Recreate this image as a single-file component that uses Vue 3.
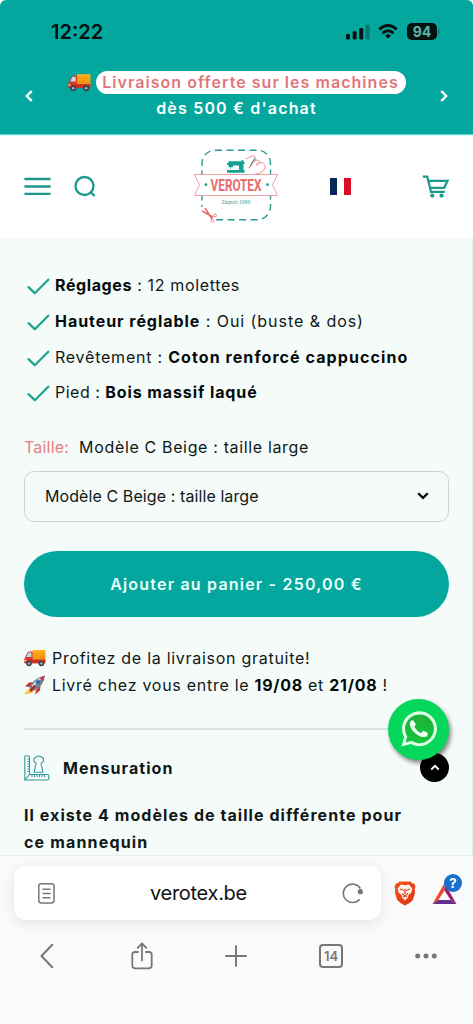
<script setup>
const features = [
  { parts: [{ t: 'Réglages', b: true, k: 'f1' }, { t: ' : 12 molettes', k: 'f2' }] },
  { parts: [{ t: 'Hauteur réglable', b: true, k: 'f3' }, { t: ' : Oui (buste & dos)', k: 'f4' }] },
  { parts: [{ t: 'Revêtement : ', k: 'f5' }, { t: 'Coton renforcé cappuccino', b: true, k: 'f6' }] },
  { parts: [{ t: 'Pied : ', k: 'f7' }, { t: 'Bois massif laqué', b: true, k: 'f8' }] },
]
</script>

<template>
  <div class="phone">
    <svg class="defs" width="0" height="0">
      <defs>
        <linearGradient id="orange" x1="0" y1="0" x2="0" y2="1"><stop offset="0" stop-color="#ffb41c" /><stop offset="1" stop-color="#f58a0c" /></linearGradient>
        <linearGradient id="brave" x1="0" y1="0" x2="1" y2="1"><stop offset="0" stop-color="#f4511e" /><stop offset="1" stop-color="#dc3410" /></linearGradient>
        <linearGradient id="wa" x1="0" y1="0" x2="0" y2="1"><stop offset="0" stop-color="#20b038" /><stop offset="1" stop-color="#12c53c" /></linearGradient>
        <symbol id="truck" viewBox="0 0 22 18">
          <rect x="8.5" y="1" width="13" height="12" rx="1" fill="url(#orange)" />
          <path d="M9 5h12M9 8.5h12" stroke="#e78a13" stroke-width=".6" />
          <path d="M3 4.2Q3.4 2.4 5 2.4H8.7V13H.6V9.2Z" fill="#d9372c" />
          <path d="M3.7 4.7Q4 3.6 5 3.6H7.4V8H2.2Z" fill="#b9dbe5" />
          <path d="M.4 10.5H21.4V14.4H.4Z" fill="#c83024" />
          <path d="M.5 11h2v1.2h-2z" fill="#ffe7a0" />
          <circle cx="5" cy="14.5" r="2.8" fill="#39414a" /><circle cx="5" cy="14.5" r="1.2" fill="#aab6bc" />
          <circle cx="17.4" cy="14.5" r="2.8" fill="#39414a" /><circle cx="17.4" cy="14.5" r="1.2" fill="#aab6bc" />
        </symbol>
      </defs>
    </svg>

    <header class="top">
      <div class="status">
        <span class="clock">12:22</span>
        <div class="sys">
          <svg width="24" height="16" viewBox="0 0 24 16"><rect x="0" y="10" width="4" height="5.5" rx="1.2" /><rect x="6.6" y="7.2" width="4" height="8.3" rx="1.2" /><rect x="13.2" y="4" width="4" height="11.5" rx="1.2" /><rect x="19.6" y=".8" width="4" height="14.7" rx="1.2" opacity=".3" /></svg>
          <svg class="wifi" width="20" height="16" viewBox="0 0 20 16" fill="none" stroke="#07110f" stroke-width="2.9"><path d="M1.2 5.3Q10-2.3 18.8 5.3" /><path d="M4.5 9.1Q10 4.4 15.5 9.1" /><path d="M7 11.4Q10 9 13 11.4L10 14.8Z" fill="#07110f" stroke="none" /></svg>
          <span class="battery">94</span><i class="nub"></i>
        </div>
      </div>
      <div class="promo">
        <svg width="10" height="12" viewBox="0 0 10 12" fill="none" stroke="#fff" stroke-width="2.5"><path d="M7.7 1 2.8 6l4.9 5" /></svg>
        <div class="promo-text">
          <div class="promo-line"><svg width="23" height="19"><use href="#truck" /></svg><span class="pill">Livraison offerte sur les machines</span></div>
          <div class="promo-second">dès 500 € d'achat</div>
        </div>
        <svg width="10" height="12" viewBox="0 0 10 12" fill="none" stroke="#fff" stroke-width="2.5"><path d="M2.3 1 7.2 6 2.3 11" /></svg>
      </div>
    </header>

    <nav class="nav">
      <svg class="burger" width="27" height="19" viewBox="0 0 27 19" stroke="#1b998b" stroke-width="2.3" stroke-linecap="round"><path d="M1.3 2H25.7M1.3 9.5H25.7M1.3 16.8H25.7" /></svg>
      <svg class="search" width="23" height="23" viewBox="0 0 23 23" fill="none" stroke="#1b998b" stroke-width="2.3"><circle cx="10.500" cy="11" r="9" /><path d="m16.300 16.800 4.400 4.200" /></svg>
      <svg class="logo" width="86" height="78" viewBox="0 0 86 78" fill="none">
        <rect x="9" y="4.2" width="68.5" height="69.5" rx="13" stroke="#2b9a93" stroke-width="1.4" stroke-dasharray="7 4.5" />
        <path d="M1.500 28.500H84.500L79.500 38.700 84.500 49.500H1.500L6.500 38.700Z" fill="#fff" stroke="#eda3a3" stroke-width="1" />
        <path d="M34 26.7V24H51.500V26.7ZM35.500 15.2H48.500V14.200H50.500V16H51.500V18H50.500V24.500H46V19.500H40V21H38V22.500H37V21H35.500V19H34V17H35.500Z" fill="#189f94" />
        <path d="M53 13Q61 8 62 11C64 15 54 22 56 22C58 22 59 15 63 14C69 14 67 19 63 19C67 12 77 20 69 26Q66 28 62 28" stroke="#e88585" stroke-width=".9" />
        <path d="m62 12-5 8" stroke="#368b8c" stroke-width="1" />
        <g transform="translate(43 45) scale(.69 1)"><text x="0" y="0" text-anchor="middle" font-family="Roboto, sans-serif" font-weight="700" font-size="17" fill="#e46d70">VEROTEX</text></g>
        <circle cx="13" cy="38.700" r="1.4" fill="#189f94" /><circle cx="74.500" cy="38.700" r="1.4" fill="#189f94" />
        <text x="43" y="58" text-anchor="middle" font-family="Liberation Serif, serif" font-style="italic" font-size="5.600" fill="#28978e">Depuis 1990</text>
        <rect x="7" y="61" width="15" height="14" fill="#fff" />
        <path d="m12 62 7 11M9 65l11 6" stroke="#e46d70" stroke-width="1.500" /><circle cx="19.500" cy="74.500" r="1.500" stroke="#e46d70" stroke-width=".8" /><circle cx="22" cy="69.500" r="1.500" stroke="#e46d70" stroke-width=".8" />
      </svg>
      <div class="flag"><i></i><i></i><i></i></div>
      <svg class="cart" width="27" height="23" viewBox="0 0 27 23" fill="none" stroke="#1b998b" stroke-width="2.200"><path d="M.8 1.700H5.300L9 16.900H22.800M6.300 5.800H25.500L22.300 12.800H8.200" /><circle cx="10.300" cy="20.600" r="2.100" fill="#1b998b" stroke="none" /><circle cx="19.500" cy="20.600" r="2.100" fill="#1b998b" stroke="none" /></svg>
    </nav>

    <main class="content">
      <ul class="features">
        <li v-for="(f, i) in features" :key="i">
          <svg width="23" height="17" viewBox="0 0 23 17" fill="none" stroke="#1fa58f" stroke-width="2.300" stroke-linecap="round" stroke-linejoin="round"><path d="M1.500 9.200 7.800 15.200 21.300 1.800" /></svg>
          <p><span v-for="p in f.parts" :key="p.k" :class="[p.k, { bold: p.b }]">{{ p.t }}</span></p>
        </li>
      </ul>
      <div class="size"><span class="label">Taille:</span><span class="value">Modèle C Beige : taille large</span></div>
      <div class="select"><span>Modèle C Beige : taille large</span><svg width="12" height="8" viewBox="0 0 12 8" fill="none" stroke="#000" stroke-width="2.300"><path d="m1.200 1.200 4.800 4.700 4.800-4.700" /></svg></div>
      <button class="buy"><span>Ajouter au panier - 250,00 €</span></button>
      <div class="delivery">
        <div><svg width="22" height="18"><use href="#truck" /></svg><span class="d1">Profitez de la livraison gratuite!</span></div>
        <div>
          <svg width="22" height="20" viewBox="0 0 22 20"><path d="M6 12 1 11.500 5 7.500 10 7Z" fill="#c8353a" /><path d="m12 15-1 4.500 5-4 .5-5Z" fill="#c8353a" /><path d="M6 12.500 0 19.500 8.500 17.500 10 14Z" fill="#ffb51d" /><path d="m6 13-3 4.500 5-2Z" fill="#fff36c" /><path d="M5.500 12.500Q8 4 20.500.8 20 11 9.500 16Z" fill="#71828f" /><path d="M8 10Q12 4 19 2L8 13Z" fill="#c5d2dc" /><path d="M15.500 2.700 20.800.5l-1.200 5.600Z" fill="#c43843" /><circle cx="14" cy="7" r="2.100" fill="#2867a7" /><path d="m6 16 5-5" stroke="#ac2936" stroke-width="2.500" /></svg>
          <span class="d2">Livré chez vous entre le <b>19/08</b> et <b>21/08</b> !</span>
        </div>
      </div>
      <hr>
      <div class="accordion">
        <svg width="26" height="26" viewBox="0 0 26 26" fill="none" stroke="#35979b" stroke-width="1.100"><path d="M5.500 19.500V2Q5.500.8 4 .8H2Q.8.800.8 2V25H23.500Q24.800 25 24.800 23.500V21Q24.800 19.500 23.500 19.500ZM5.500 19.500.8 25" /><path d="M5.500 4H3.400M5.500 6.500H3.400M5.500 9H3.400M5.500 11.500H3.400M5.500 14H3.400M5.500 16.500H3.400M8 19.500v2.500M10.500 19.500v2.500M13 19.500v2.500M15.500 19.500v2.500M18 19.500v2.500M20.500 19.500v2.500" /><path d="M13 1.500Q14.800.5 16.500 1.500L19.500 3.200 19.200 6.500 17.200 8.200Q16.800 9.500 17.800 11.500L18.800 17.300H10.200L11.300 11.500Q12.300 9.500 12 8.200L10 6.500 10 3.200Z" /></svg>
        <h2>Mensuration</h2>
        <span class="toggle"><svg width="10" height="7" viewBox="0 0 10 7" fill="none" stroke="#fff" stroke-width="1.900"><path d="M1.300 5.500 5 1.800l3.700 3.700" /></svg></span>
        <span class="whatsapp"><svg width="38" height="38" viewBox="0 0 38 38"><path d="M1.500 36.500 4.100 27.100A17.500 17.500 0 1 1 10.800 33.900Z" fill="#dcffe5" /><path d="M5.600 32.400 7.300 26.500A14.400 14.400 0 1 1 11.500 30.800Z" fill="url(#wa)" /><path d="M13.200 10.600C12.400 9.900 11.200 10.400 10.500 11.600C7.700 16 13.500 22.700 18.500 25.500C23.600 28.400 28.500 27.100 27.800 22.900L23.500 20.800C22.600 20.800 21.900 23.300 20.800 22.900C17.600 21.600 15.600 19.200 14.600 17.100C14.300 16.200 16.200 15.200 15.800 14.100Z" fill="#f0fff3" /></svg></span>
      </div>
      <div class="details"><span class="t1">Il existe 4 modèles de taille différente pour</span><span class="t2">ce mannequin</span></div>
    </main>

    <footer class="browser">
      <div class="address-row">
        <div class="address">
          <svg width="17" height="21" viewBox="0 0 17 21" fill="none" stroke="#77777b" stroke-width="1.500"><rect x=".8" y=".8" width="15.200" height="19.200" rx="2.400" /><path d="M4.500 6.300h8M4.500 10.500h8M4.500 14.700h8" /></svg>
          <span>verotex.be</span>
          <svg width="22" height="21" viewBox="0 0 22 21" fill="none" stroke="#77777b" stroke-width="1.600"><path d="M18.300 5.500A9.200 9.200 0 1 0 17.600 16.200" /><circle cx="18.400" cy="8.700" r="2.600" fill="#77777b" stroke="none" /></svg>
        </div>
        <svg class="lion" width="22" height="26" viewBox="0 0 22 26"><path d="M5.500 1.500H16.500L18.500 3.500 20 3.300 21.500 6.500 20.700 9 21 13 18.800 20Q16 23.500 11 25.500 6 23.500 3.200 20L1 13 1.300 9 .5 6.500 2 3.300 3.500 3.500Z" fill="url(#brave)" /><path d="M7 4.500 11 5.300 15 4.500 18.300 8.500 17.400 12.500 14.500 15 14 17.500 11 20.500 8 17.500 7.500 15 4.600 12.500 3.700 8.500Z" fill="#fff4ee" /><path d="m6 9 4 1.500M16 9l-4 1.500M11 9v5M8 13.500l3 2.500 3-2.500M9 17l2-1 2 1" fill="none" stroke="#e6461c" stroke-width="1.300" /></svg>
        <span class="bat"><svg width="25" height="23" viewBox="0 0 25 23"><path d="M12.500 1 .5 22 6.300 18 12.500 8.500Z" fill="#ef482b" /><path d="M12.500 1 24.500 22 18.700 18 12.500 8.500Z" fill="#9e1f63" /><path d="M.5 22H24.500L18.700 18H6.300Z" fill="#662d91" /></svg><i>?</i></span>
      </div>
      <div class="tools">
        <svg width="14" height="26" viewBox="0 0 14 26" fill="none" stroke="#77777b" stroke-width="2" stroke-linecap="round" stroke-linejoin="round"><path d="M12.300 1.800 1.500 13l10.800 11.200" /></svg>
        <svg width="22" height="28" viewBox="0 0 22 28" fill="none" stroke="#77777b" stroke-width="1.800" stroke-linecap="round" stroke-linejoin="round"><path d="M7 10H4Q1.300 10 1.300 12.700V23.200Q1.300 26.300 4.300 26.300H17.700Q20.700 26.300 20.700 23.200V12.700Q20.700 10 18 10H15M11 18.500V1.700M6.700 5.900 11 1.500l4.300 4.400" /></svg>
        <svg width="22" height="22" viewBox="0 0 22 22" stroke="#77777b" stroke-width="1.900" stroke-linecap="round"><path d="M1 11H21M11 1V21" /></svg>
        <span class="tabs">14</span>
        <svg width="22" height="6" viewBox="0 0 22 6" fill="#77777b"><circle cx="2.700" cy="3" r="2.500" /><circle cx="11" cy="3" r="2.500" /><circle cx="19.300" cy="3" r="2.500" /></svg>
      </div>
    </footer>
  </div>
</template>

<style>
body { margin: 0; background: #fff; }
</style>

<style scoped>
* { box-sizing: border-box; }
.phone { width: 473px; height: 1024px; overflow: hidden; font-family: Inter, "Noto Sans", sans-serif; font-size: 16px; color: #101817; display: flex; flex-direction: column; white-space: pre; }
.defs { position: absolute; }
svg { flex: none; display: block; }
.top { height: 135px; flex: none; background: #03a79e; border-radius: 6px 6px 0 0; border-bottom: 1px solid #6bcfc9; }
.status { height: 63px; padding: 0 33px 0 51px; display: flex; align-items: center; justify-content: space-between; }
.clock { font-size: 20px; font-weight: 600; color: #07110f; }
.sys { display: flex; align-items: center; fill: #07110f; }
.wifi { margin-left: 8px; }
.battery { width: 30px; height: 17px; margin-left: 9px; border-radius: 5px; background: #07110f; color: #58b5ad; font-size: 14px; line-height: 17px; font-weight: 700; text-align: center; }
.nub { width: 2px; height: 5px; margin-left: 1px; border-radius: 0 2px 2px 0; background: #09877f; }
.promo { display: flex; align-items: center; justify-content: space-between; padding: 0 24px; height: 65px; color: #fff; font-weight: 600; }
.promo-text { display: flex; flex-direction: column; align-items: center; }
.promo-line { display: flex; align-items: center; height: 26px; gap: 5px; }
.pill { width: 310px; height: 23px; background: #fff; border-radius: 12px; color: #df767a; line-height: 23px; text-align: center; letter-spacing: 1.040px; }
.promo-second { height: 26px; line-height: 25px; letter-spacing: 1.170px; }
.nav { height: 103px; flex: none; background: #fff; display: flex; align-items: center; padding: 0 24px 2px; border-top: 1px solid #cffffb; }
.search { margin-left: 23px; }
.logo { margin-left: 96px; margin-bottom: 3px; }
.flag { display: flex; margin-left: 50.500px; width: 22px; height: 17px; }
.flag i { flex: 1; }
.flag i:first-child { background: #05285b; }
.flag i:last-child { background: #dc0d27; }
.cart { margin-left: auto; }
.content { height: 617px; flex: none; overflow: hidden; background: #f4fbf9; padding: 30px 23px 0 24px; border-right: 1px solid #d8fadd; }
.features { list-style: none; margin: 0; padding: 0; }
.features li { height: 35.700px; display: flex; align-items: center; padding-left: 3px; gap: 5px; }
.features p { margin: 0 0 1px; }
.features li svg { margin-top: 2px; }
.bold, b { font-weight: 700; color: #050b0a; }
.f1 { letter-spacing: .6px; }
.f2 { letter-spacing: .65px; }
.f3 { letter-spacing: .95px; }
.f4 { letter-spacing: .95px; }
.f5 { letter-spacing: .77px; }
.f6 { letter-spacing: 1.080px; }
.f7 { letter-spacing: .5px; }
.f8 { letter-spacing: .9px; }
.size { height: 24px; margin-top: 24px; line-height: 24px; display: flex; gap: 10px; }
.label { color: #e57f82; letter-spacing: .2px; }
.value { letter-spacing: .65px; }
.select { height: 51px; margin-top: 12px; border: 1px solid #cdd5d3; border-radius: 10px; padding: 0 19px 1px 20px; display: flex; align-items: center; justify-content: space-between; letter-spacing: .09px; }
.buy { display: block; width: 425px; height: 66px; margin-top: 29px; padding: 0; border: 0; border-radius: 33px; background: #03a79e; color: #e8fffb; font: 600 16px Inter, sans-serif; letter-spacing: 1.200px; white-space: pre; }
.delivery { margin-top: 28px; letter-spacing: .72px; }
.delivery div { height: 27px; display: flex; align-items: center; gap: 6px; }
hr { margin: 29px 0 0; border: 0; height: 2px; background: #dce2e0; }
.accordion { position: relative; height: 76px; display: flex; align-items: center; }
h2 { margin: 0 0 0 13px; font-size: 16px; font-weight: 700; letter-spacing: 1.050px; }
.toggle { margin-left: auto; width: 29px; height: 29px; border-radius: 50%; background: #000; display: grid; place-items: center; }
.whatsapp { position: absolute; right: 0; top: -31px; width: 61px; height: 61px; border-radius: 50%; background: #05d75b; box-shadow: 2px 3px 4px #0007; display: grid; place-items: center; }
.details { font-weight: 700; line-height: 27px; display: flex; flex-direction: column; margin-top: -4px; }
.details span { align-self: flex-start; }
.t1 { letter-spacing: 1.060px; }
.t2 { letter-spacing: 1.170px; }
.browser { height: 169px; flex: none; background: #fafafa; border-top: 1px solid #e6eeec; }
.address-row { display: flex; align-items: center; padding: 10px 0 0 14px; }
.address { width: 367px; height: 54px; background: #fff; border-radius: 12px; box-shadow: 0 3px 14px #00000017; display: flex; align-items: center; justify-content: space-between; padding: 0 17px 0 24px; font-size: 20px; letter-spacing: -.3px; color: #111; }
.lion { margin-left: 13px; }
.bat { position: relative; margin-left: 16px; }
.bat i { position: absolute; left: 12px; top: -8px; width: 18px; height: 18px; border-radius: 50%; background: #176fcf; color: #fff; font: 700 13px/18px Inter, sans-serif; text-align: center; }
.tools { height: 72px; display: grid; grid-template-columns: repeat(5, 1fr); align-items: center; justify-items: center; }
.tabs { width: 24px; height: 24px; border: 2px solid #77777b; border-radius: 4px; color: #77777b; font-size: 13px; font-weight: 600; line-height: 20px; text-align: center; }
</style>
